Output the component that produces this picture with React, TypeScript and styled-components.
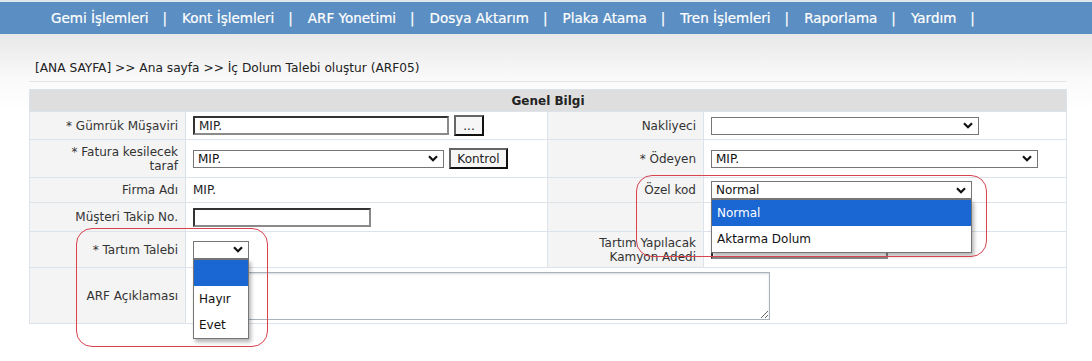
import styled, { createGlobalStyle } from "styled-components";

const GlobalStyle = createGlobalStyle`
  body {
    margin: 0;
    background: #fff;
    font-family: "DejaVu Sans", Verdana, sans-serif;
    color: #222;
  }
`;

const menu = [
  "Gemi İşlemleri",
  "Kont İşlemleri",
  "ARF Yonetimi",
  "Dosya Aktarım",
  "Plaka Atama",
  "Tren İşlemleri",
  "Raporlama",
  "Yardım",
];

type DropProps = {
  width: number;
  value?: string;
  options?: string[];
  active?: number;
};

function Dropdown({ width, value, options, active }: DropProps) {
  return (
    <SelectBox $w={width}>
      <span>{value}</span>
      <svg width="10" height="7" viewBox="0 0 10 7">
        <polyline points="1,1.2 5,5.2 9,1.2" fill="none" stroke="#111" strokeWidth="2.2" />
      </svg>
      {options && (
        <OptionList>
          {options.map((o, i) => (
            <OptionItem key={i} $active={i === active}>
              {o || "\u00a0"}
            </OptionItem>
          ))}
        </OptionList>
      )}
    </SelectBox>
  );
}

export default function App() {
  return (
    <Page>
      <GlobalStyle />
      <NavBar>
        {menu.map((m) => (
          <NavItem key={m}>
            {m}
            <NavSep>|</NavSep>
          </NavItem>
        ))}
      </NavBar>
      <Content>
        <Breadcrumb>
          [ANA SAYFA] &gt;&gt; Ana sayfa &gt;&gt; İç Dolum Talebi oluştur (ARF05)
        </Breadcrumb>
        <Rule />
        <FormTable>
          <colgroup>
            <col style={{ width: 156 }} />
            <col style={{ width: 362 }} />
            <col style={{ width: 156 }} />
            <col style={{ width: 363 }} />
          </colgroup>
          <tbody>
            <Row $h={22}>
              <HeadCell colSpan={4}>Genel Bilgi</HeadCell>
            </Row>
            <Row $h={28}>
              <Label>* Gümrük Müşaviri</Label>
              <Value>
                <Group>
                  <TextBox $w={256} defaultValue="MIP." />
                  <SmallButton $w={30}>...</SmallButton>
                </Group>
              </Value>
              <Label>Nakliyeci</Label>
              <Value>
                <Dropdown width={268} />
              </Value>
            </Row>
            <Row $h={38}>
              <Label>
                * Fatura kesilecek
                <br />
                taraf
              </Label>
              <Value>
                <Group>
                  <Dropdown width={251} value="MIP." />
                  <SmallButton $w={59}>Kontrol</SmallButton>
                </Group>
              </Value>
              <Label>* Ödeyen</Label>
              <Value>
                <Dropdown width={327} value="MIP." />
              </Value>
            </Row>
            <Row $h={25}>
              <Label>Firma Adı</Label>
              <Value>MIP.</Value>
              <Label>Özel kod</Label>
              <Value>
                <Dropdown
                  width={261}
                  value="Normal"
                  options={["Normal", "Aktarma Dolum"]}
                  active={0}
                />
              </Value>
            </Row>
            <Row $h={29}>
              <Label>Müşteri Takip No.</Label>
              <Value>
                <TextBox $w={178} />
              </Value>
              <Label />
              <Value />
            </Row>
            <Row $h={36}>
              <Label>* Tartım Talebi</Label>
              <Value>
                <Dropdown width={56} options={["", "Hayır", "Evet"]} active={0} />
              </Value>
              <Label>
                Tartım Yapılacak
                <br />
                Kamyon Adedi
              </Label>
              <Value>
                <TextBox $w={177} />
              </Value>
            </Row>
            <Row $h={56}>
              <Label>ARF Açıklaması</Label>
              <Value colSpan={3}>
                <Notes />
              </Value>
            </Row>
          </tbody>
        </FormTable>
      </Content>
      <Annotation $x={76} $y={228} $w={192} $h={119} />
      <Annotation $x={636} $y={175} $w={351} $h={82} />
    </Page>
  );
}

const Page = styled.div`
  position: relative;
  width: 1092px;
  min-height: 361px;
  background: linear-gradient(to bottom, #e8e8e8 34px, #fafafa 80px, #fff 110px);
`;

const NavBar = styled.div`
  display: flex;
  align-items: center;
  height: 32px;
  border-top: 2px solid #dfe6ee;
  padding-left: 51px;
  background: #5b8ec2;
`;

const NavItem = styled.div`
  display: flex;
  align-items: center;
  color: #fff;
  font-size: 13.5px;
  white-space: nowrap;
  -webkit-text-stroke: 0.2px #fff;
`;

const NavSep = styled.span`
  margin: 0 15px 0 14px;
`;

const Content = styled.div`
  padding: 0 26px 0 29px;
`;

const Breadcrumb = styled.div`
  padding: 27px 0 0 6px;
  font-size: 12.2px;
  line-height: 14px;
  color: #222;
`;

const Rule = styled.div`
  margin-top: 6px;
  height: 1px;
  background: #e4e4e4;
`;

const FormTable = styled.table`
  margin-top: 7px;
  width: 1037px;
  border-collapse: collapse;
  table-layout: fixed;
  font-size: 12px;
  border: 1px solid #dde3ea;
`;

const Row = styled.tr<{ $h: number }>`
  height: ${(p) => p.$h}px;
`;

const HeadCell = styled.td`
  background: #dedede;
  text-align: center;
  font-weight: bold;
  color: #222;
  padding: 0;
`;

const Label = styled.td`
  background: #f4f4f4;
  text-align: right;
  padding: 0 7px 0 4px;
  color: #333;
  line-height: 14px;
  border: 1px solid #dde3ea;
  vertical-align: middle;
`;

const Value = styled.td`
  background: #fff;
  padding: 0 7px;
  color: #222;
  border: 1px solid #dde3ea;
  vertical-align: middle;
`;

const Group = styled.div`
  display: flex;
  align-items: center;
  gap: 5px;
`;

const TextBox = styled.input<{ $w: number }>`
  box-sizing: border-box;
  width: ${(p) => p.$w}px;
  height: 19px;
  padding: 0 4px;
  border: 2px solid;
  border-color: #333 #8a8a8a #8a8a8a #333;
  font-family: "DejaVu Sans", Verdana, sans-serif;
  font-size: 12px;
  color: #222;
  background: #fff;
  outline: none;
`;

const SmallButton = styled.button<{ $w: number }>`
  box-sizing: border-box;
  width: ${(p) => p.$w}px;
  height: 21px;
  padding: 0;
  border: 2px solid;
  border-color: #666 #111 #111 #666;
  background: #f6f6f6;
  font-family: "DejaVu Sans", Verdana, sans-serif;
  font-size: 12px;
  color: #222;
`;

const SelectBox = styled.div<{ $w: number }>`
  position: relative;
  box-sizing: border-box;
  display: inline-flex;
  align-items: center;
  justify-content: space-between;
  width: ${(p) => p.$w}px;
  height: 18px;
  padding: 0 5px 0 4px;
  border: 1px solid #767676;
  background: #fff;
  font-size: 12px;
  color: #111;
  vertical-align: middle;
`;

const OptionList = styled.div`
  position: absolute;
  top: 17px;
  left: -1px;
  right: -1px;
  z-index: 2;
  border: 1px solid #767676;
  background: #fff;
  box-shadow: 2px 3px 4px rgba(0, 0, 0, 0.3);
`;

const OptionItem = styled.div<{ $active: boolean }>`
  display: flex;
  align-items: center;
  height: 26px;
  padding-left: 5px;
  background: ${(p) => (p.$active ? "#1a66d2" : "#fff")};
  color: ${(p) => (p.$active ? "#fff" : "#111")};
  font-size: 12px;
`;

const Notes = styled.textarea`
  display: block;
  box-sizing: border-box;
  width: 577px;
  height: 48px;
  border: 1px solid #a9b3c0;
  box-shadow: inset 0 1px 2px rgba(0, 0, 0, 0.15);
  font-family: "DejaVu Sans", Verdana, sans-serif;
  font-size: 12px;
  outline: none;
`;

const Annotation = styled.div<{ $x: number; $y: number; $w: number; $h: number }>`
  position: absolute;
  left: ${(p) => p.$x}px;
  top: ${(p) => p.$y}px;
  width: ${(p) => p.$w}px;
  height: ${(p) => p.$h}px;
  box-sizing: border-box;
  border: 1.3px solid #d8434d;
  border-radius: 16px;
  z-index: 3;
  pointer-events: none;
`;
